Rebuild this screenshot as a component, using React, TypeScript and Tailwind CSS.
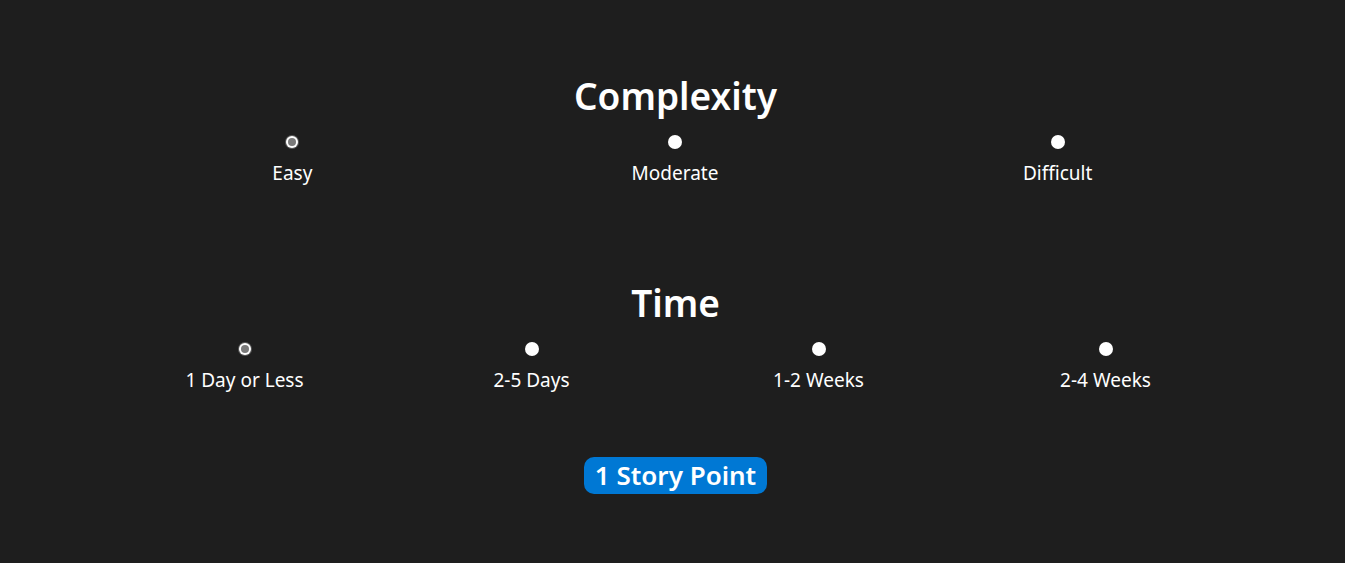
import React, { useState } from 'react';

const font = { fontFamily: '"Segoe UI", "Noto Sans", "Open Sans", sans-serif' };

const Radio: React.FC<{ checked: boolean }> = ({ checked }) =>
  checked ? (
    <span className="shrink-0 w-[14px] h-[14px] rounded-full bg-[#5a5a5a] flex items-center justify-center">
      <span className="w-[12px] h-[12px] rounded-full bg-white flex items-center justify-center">
        <span className="w-[8px] h-[8px] rounded-full bg-[#7a7a7a]" />
      </span>
    </span>
  ) : (
    <span className="shrink-0 w-[14px] h-[14px] rounded-full bg-white" />
  );

const Group: React.FC<{
  title: string;
  options: string[];
  value: number;
  onChange: (i: number) => void;
  cols: string;
  className?: string;
}> = ({ title, options, value, onChange, cols, className }) => (
  <section className={className}>
    <h2 className="text-center text-white text-[37px] font-semibold h-[44px] leading-[44px]">{title}</h2>
    <div className={`grid ${cols} w-[1148px] ml-[95px] mt-[17px]`}>
      {options.map((opt, i) => (
        <label key={opt} className="flex flex-col items-center cursor-pointer" onClick={() => onChange(i)}>
          <span className="h-[14px] flex items-center">
            <Radio checked={value === i} />
          </span>
          <span className="mt-[11px] text-white text-[19px] leading-[26px]">{opt}</span>
        </label>
      ))}
    </div>
  </section>
);

export default function App() {
  const [complexity, setComplexity] = useState(0);
  const [time, setTime] = useState(0);

  return (
    <div className="min-h-[563px] w-full bg-[#1e1e1e] pt-[74px] pl-[6px]" style={font}>
      <Group
        title="Complexity"
        options={['Easy', 'Moderate', 'Difficult']}
        value={complexity}
        onChange={setComplexity}
        cols="grid-cols-3"
      />
      <Group
        title="Time"
        options={['1 Day or Less', '2-5 Days', '1-2 Weeks', '2-4 Weeks']}
        value={time}
        onChange={setTime}
        cols="grid-cols-4"
        className="mt-[95px]"
      />
      <div className="flex justify-center mt-[64px]">
        <span className="inline-flex items-center h-[37px] px-[11px] rounded-[10px] bg-[#0078d4] text-white text-[26px] font-semibold">
          {complexity + time + 1} Story Point{complexity + time + 1 > 1 ? 's' : ''}
        </span>
      </div>
    </div>
  );
}
